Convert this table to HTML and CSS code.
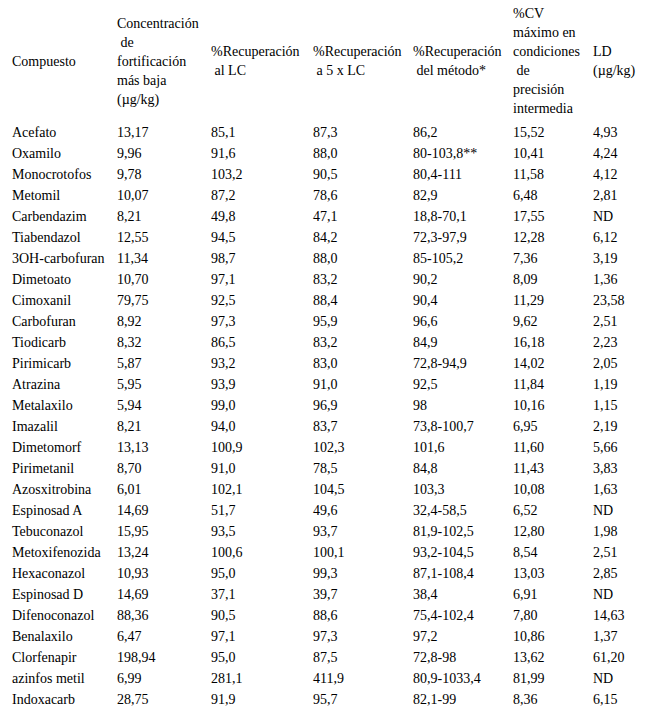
FILE: index.html
```html
<!DOCTYPE html>
<html lang="es">
<head>
<meta charset="utf-8">
<title>Tabla de validación</title>
<link rel="stylesheet" href="styles.css">
</head>
<body>
<table class="results">
  <colgroup>
    <col class="c-name">
    <col class="c-conc">
    <col class="c-rec1">
    <col class="c-rec5">
    <col class="c-met">
    <col class="c-cv">
    <col class="c-ld">
  </colgroup>
  <thead>
    <tr>
      <th>Compuesto</th>
      <th>Concentración<br>&nbsp;de<br>fortificación<br>más baja<br>(µg/kg)</th>
      <th>%Recuperación<br>&nbsp;al LC</th>
      <th>%Recuperación<br>&nbsp;a 5 x LC</th>
      <th>%Recuperación<br>&nbsp;del método*</th>
      <th>%CV<br>máximo en<br>condiciones<br>&nbsp;de<br>precisión<br>intermedia</th>
      <th>LD<br>(µg/kg)</th>
    </tr>
  </thead>
  <tbody>
    <tr><td>Acefato</td><td>13,17</td><td>85,1</td><td>87,3</td><td>86,2</td><td>15,52</td><td>4,93</td></tr>
    <tr><td>Oxamilo</td><td>9,96</td><td>91,6</td><td>88,0</td><td>80-103,8**</td><td>10,41</td><td>4,24</td></tr>
    <tr><td>Monocrotofos</td><td>9,78</td><td>103,2</td><td>90,5</td><td>80,4-111</td><td>11,58</td><td>4,12</td></tr>
    <tr><td>Metomil</td><td>10,07</td><td>87,2</td><td>78,6</td><td>82,9</td><td>6,48</td><td>2,81</td></tr>
    <tr><td>Carbendazim</td><td>8,21</td><td>49,8</td><td>47,1</td><td>18,8-70,1</td><td>17,55</td><td>ND</td></tr>
    <tr><td>Tiabendazol</td><td>12,55</td><td>94,5</td><td>84,2</td><td>72,3-97,9</td><td>12,28</td><td>6,12</td></tr>
    <tr><td>3OH-carbofuran</td><td>11,34</td><td>98,7</td><td>88,0</td><td>85-105,2</td><td>7,36</td><td>3,19</td></tr>
    <tr><td>Dimetoato</td><td>10,70</td><td>97,1</td><td>83,2</td><td>90,2</td><td>8,09</td><td>1,36</td></tr>
    <tr><td>Cimoxanil</td><td>79,75</td><td>92,5</td><td>88,4</td><td>90,4</td><td>11,29</td><td>23,58</td></tr>
    <tr><td>Carbofuran</td><td>8,92</td><td>97,3</td><td>95,9</td><td>96,6</td><td>9,62</td><td>2,51</td></tr>
    <tr><td>Tiodicarb</td><td>8,32</td><td>86,5</td><td>83,2</td><td>84,9</td><td>16,18</td><td>2,23</td></tr>
    <tr><td>Pirimicarb</td><td>5,87</td><td>93,2</td><td>83,0</td><td>72,8-94,9</td><td>14,02</td><td>2,05</td></tr>
    <tr><td>Atrazina</td><td>5,95</td><td>93,9</td><td>91,0</td><td>92,5</td><td>11,84</td><td>1,19</td></tr>
    <tr><td>Metalaxilo</td><td>5,94</td><td>99,0</td><td>96,9</td><td>98</td><td>10,16</td><td>1,15</td></tr>
    <tr><td>Imazalil</td><td>8,21</td><td>94,0</td><td>83,7</td><td>73,8-100,7</td><td>6,95</td><td>2,19</td></tr>
    <tr><td>Dimetomorf</td><td>13,13</td><td>100,9</td><td>102,3</td><td>101,6</td><td>11,60</td><td>5,66</td></tr>
    <tr><td>Pirimetanil</td><td>8,70</td><td>91,0</td><td>78,5</td><td>84,8</td><td>11,43</td><td>3,83</td></tr>
    <tr><td>Azosxitrobina</td><td>6,01</td><td>102,1</td><td>104,5</td><td>103,3</td><td>10,08</td><td>1,63</td></tr>
    <tr><td>Espinosad A</td><td>14,69</td><td>51,7</td><td>49,6</td><td>32,4-58,5</td><td>6,52</td><td>ND</td></tr>
    <tr><td>Tebuconazol</td><td>15,95</td><td>93,5</td><td>93,7</td><td>81,9-102,5</td><td>12,80</td><td>1,98</td></tr>
    <tr><td>Metoxifenozida</td><td>13,24</td><td>100,6</td><td>100,1</td><td>93,2-104,5</td><td>8,54</td><td>2,51</td></tr>
    <tr><td>Hexaconazol</td><td>10,93</td><td>95,0</td><td>99,3</td><td>87,1-108,4</td><td>13,03</td><td>2,85</td></tr>
    <tr><td>Espinosad D</td><td>14,69</td><td>37,1</td><td>39,7</td><td>38,4</td><td>6,91</td><td>ND</td></tr>
    <tr><td>Difenoconazol</td><td>88,36</td><td>90,5</td><td>88,6</td><td>75,4-102,4</td><td>7,80</td><td>14,63</td></tr>
    <tr><td>Benalaxilo</td><td>6,47</td><td>97,1</td><td>97,3</td><td>97,2</td><td>10,86</td><td>1,37</td></tr>
    <tr><td>Clorfenapir</td><td>198,94</td><td>95,0</td><td>87,5</td><td>72,8-98</td><td>13,62</td><td>61,20</td></tr>
    <tr><td>azinfos metil</td><td>6,99</td><td>281,1</td><td>411,9</td><td>80,9-1033,4</td><td>81,99</td><td>ND</td></tr>
    <tr><td>Indoxacarb</td><td>28,75</td><td>91,9</td><td>95,7</td><td>82,1-99</td><td>8,36</td><td>6,15</td></tr>
  </tbody>
</table>
</body>
</html>
```

FILE: styles.css
```css
html, body {
  margin: 0;
  padding: 0;
  background: #ffffff;
}

body {
  padding: 4px 0 0 8px;
  font-family: "Liberation Serif", "Times New Roman", serif;
  font-size: 14px;
  color: #000000;
}

.results {
  border-collapse: collapse;
  table-layout: fixed;
  width: 640px;
}

.c-name { width: 105px; }
.c-conc { width: 94px; }
.c-rec1 { width: 102px; }
.c-rec5 { width: 100px; }
.c-met  { width: 100px; }
.c-cv   { width: 80px; }
.c-ld   { width: 59px; }

.results th,
.results td {
  padding: 0 0 0 4px;
  text-align: left;
  white-space: nowrap;
  font-weight: normal;
}

.results th {
  line-height: 19px;
  vertical-align: middle;
  padding-bottom: 4px;
}

.results td {
  height: 21px;
  line-height: 21px;
  vertical-align: middle;
}
```
